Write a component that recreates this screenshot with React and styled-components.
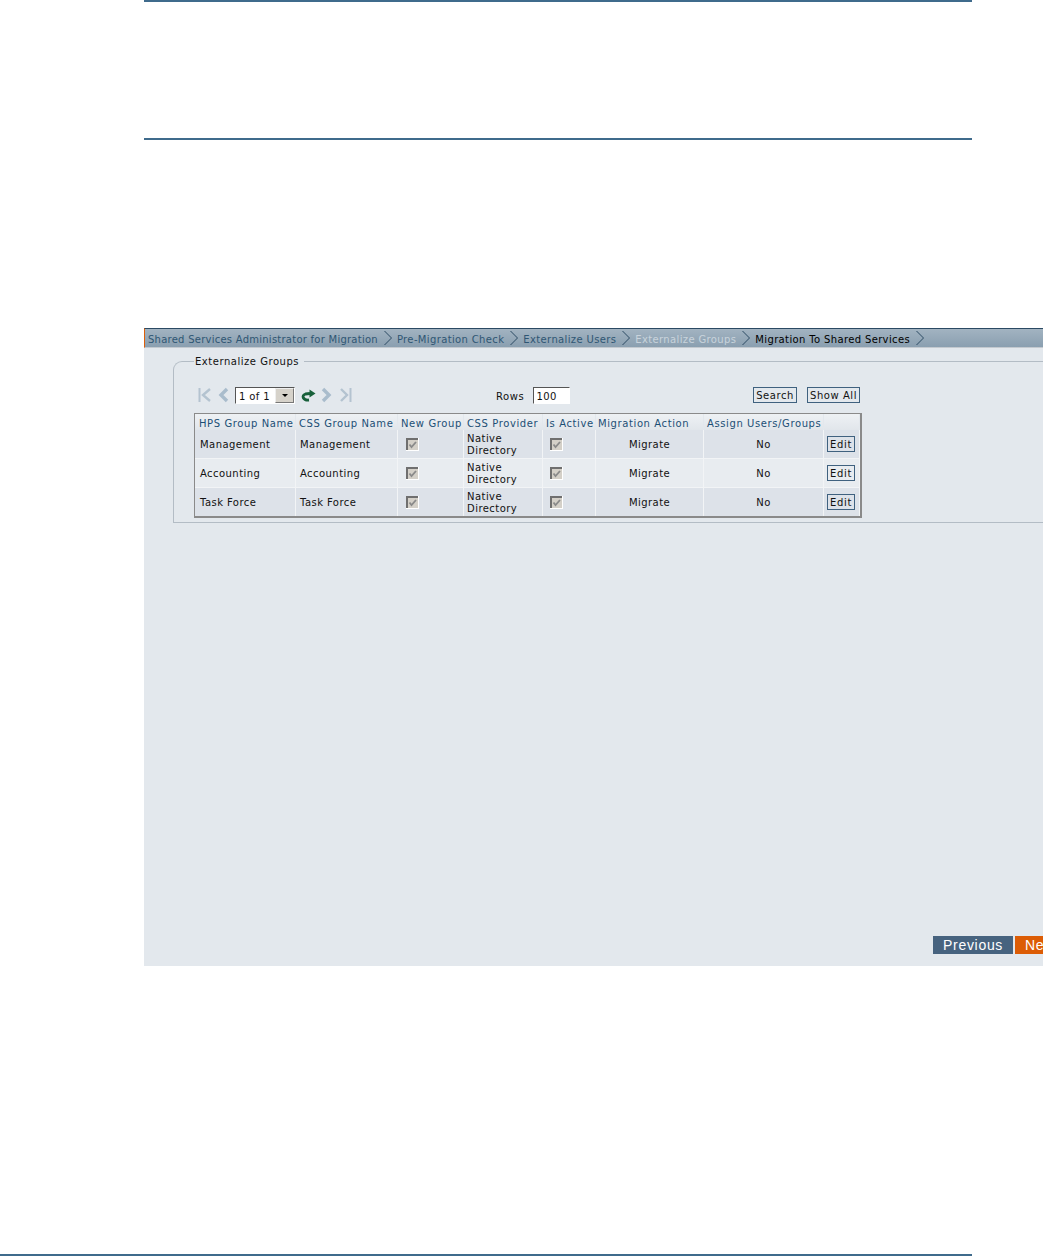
import React from 'react';
import styled, { createGlobalStyle } from 'styled-components';

const Global = createGlobalStyle`
  html, body { margin:0; padding:0; background:#fff; }
  body { font-family:"DejaVu Sans", Verdana, sans-serif; font-size:10px; color:#111; }
`;

const Page = styled.div`
  width:1043px;
  height:1256px;
  overflow:hidden;
  display:flex;
  flex-direction:column;
  padding-left:144px;
  box-sizing:border-box;
`;

const Band = styled.div`
  width:828px;
  height:140px;
  flex:none;
  box-sizing:border-box;
  border-top:2px solid #3f6b8c;
  border-bottom:2px solid #3f6b8c;
`;

const BottomRule = styled.div`
  width:972px;
  flex:none;
  margin:auto 0 0 -144px;
  border-top:2px solid #3f6b8c;
`;

const Shot = styled.div`
  width:899px;
  height:638px;
  flex:none;
  margin-top:188px;
  background:#e3e8ed;
  display:flex;
  flex-direction:column;
  overflow:hidden;
`;

const Crumbs = styled.div`
  height:18px;
  flex:none;
  display:flex;
  align-items:center;
  padding-left:3px;
  border-top:1px solid #2b4a63;
  border-left:1px solid #dd5f0a;
  border-bottom:1px solid #c3c9cf;
  background:linear-gradient(#a2b3c1, #8a9fb0);
`;

const Crumb = styled.span`
  white-space:nowrap;
  padding-top:2px;
  letter-spacing:${p => p.$tight ? '.25px' : '.36px'};
  color:${p => p.$state === 'current' ? '#000' : p.$state === 'active' ? '#dbe2e8' : '#2f5673'};
  ${p => p.$state === 'active' ? 'opacity:.75;' : ''}
`;

const ChevronSvg = styled.svg`
  width:10px;
  height:16px;
  margin:0 4px 0 5px;
  flex:none;
`;

const Chevron = () => (
  <ChevronSvg viewBox="0 0 10 16" fill="none" stroke="#2b4a63" strokeWidth="1">
    <path d="M1.5 1 L8.5 8 L1.5 15" />
  </ChevronSvg>
);

const Fieldset = styled.fieldset`
  margin:6px 0 0 29px;
  width:900px;
  height:169px;
  box-sizing:border-box;
  padding:0 0 0 20px;
  flex:none;
  border:1px solid #b3bcc5;
  border-radius:9px 0 0 0;
  border-right:0;
  min-inline-size:auto;
`;

const Legend = styled.legend`
  padding:2px 5px 0 1px;
  margin-left:0;
  font-size:10px;
  line-height:12px;
  letter-spacing:.53px;
`;

const Toolbar = styled.div`
  width:666px;
  height:20px;
  margin-top:17px;
  display:flex;
  align-items:center;
`;

const PagerIcon = styled.svg`
  width:${p => p.$w || 14}px;
  height:16px;
  flex:none;
  margin-right:${p => p.$gap || 0}px;
`;

const Pager = styled.div`
  display:flex;
  align-items:center;
  padding-left:4px;
  width:298px;
  flex:none;
`;

const PageSelect = styled.div`
  width:60px;
  height:17px;
  box-sizing:border-box;
  display:flex;
  align-items:flex-start;
  justify-content:space-between;
  line-height:17px;
  border:1px solid #555;
  border-right-color:#fff;
  border-bottom-color:#fff;
  background:#fff;
  padding-left:3px;
  margin-right:5px;
  letter-spacing:.4px;
`;

const SelectArrow = styled.span`
  width:19px;
  height:15px;
  flex:none;
  display:flex;
  align-items:center;
  justify-content:center;
  background:#d6d2ca;
  border:1px solid #eee;
  border-right-color:#777;
  border-bottom-color:#777;
  box-sizing:border-box;
  &::after {
    content:"";
    border:3px solid transparent;
    border-top:3px solid #000;
    border-bottom:0;
  }
`;

const RowsLabel = styled.span`
  letter-spacing:.6px;
  padding-top:2px;
  margin-right:9px;
`;

const RowsInput = styled.div`
  width:37px;
  height:17px;
  box-sizing:border-box;
  border:1px solid #555;
  border-right-color:#fff;
  border-bottom-color:#fff;
  background:#fff;
  padding-left:2px;
  line-height:17px;
  letter-spacing:.4px;
`;

const ToolButton = styled.div`
  box-sizing:border-box;
  width:${p => p.$w}px;
  height:16px;
  text-align:center;
  line-height:16px;
  border:1px solid #3f617f;
  background:#e3e8ed;
  letter-spacing:.55px;
  margin-left:${p => p.$left}px;
  flex:none;
`;

const Table = styled.table`
  width:667px;
  margin-top:8px;
  table-layout:fixed;
  border-collapse:separate;
  border-spacing:0;
  box-sizing:border-box;
  border-style:solid;
  border-width:1px 2px 2px 1px;
  border-color:#8a8a8a;
  background:#e9edf1;
`;

const Head = styled.th`
  height:16px;
  padding:2px 0 0 ${p => p.$pad ?? 3}px;
  box-sizing:border-box;
  text-align:left;
  font-weight:normal;
  font-size:10px;
  white-space:nowrap;
  letter-spacing:.6px;
  color:#1c4f75;
  background:linear-gradient(#eef1f4, #e1e6eb);
  border-right:1px solid #e3e8ed;
`;

const Cell = styled.td`
  height:${p => p.$last ? 28 : 29}px;
  padding:${p => p.$control ? 0 : 2}px 0 0 ${p => p.$center ? 0 : (p.$pad ?? 4)}px;
  box-sizing:border-box;
  font-size:10px;
  line-height:12px;
  letter-spacing:.45px;
  text-align:${p => p.$center ? 'center' : 'left'};
  background:${p => p.$odd ? '#dde2e9' : '#e8ecf0'};
  border-right:1px solid #f2f4f6;
  border-bottom:${p => p.$last ? 0 : 1}px solid #f2f4f6;
`;

const CheckSvg = styled.svg`
  width:13px;
  height:13px;
  display:block;
  margin-left:${p => p.$left}px;
`;

const Check = ({ left }) => (
  <CheckSvg $left={left} viewBox="0 0 13 13">
    <rect x="0" y="0" width="13" height="13" fill="#fff" />
    <rect x="0" y="0" width="12" height="12" fill="#6f6f6f" />
    <rect x="2" y="2" width="10" height="10" fill="#d4d0c8" />
    <path d="M3.5 6.5 L5.5 9 L10 4" fill="none" stroke="#8a8a8a" strokeWidth="1.8" />
  </CheckSvg>
);

const EditButton = styled.div`
  width:28px;
  height:16px;
  margin-left:3px;
  box-sizing:border-box;
  border:1px solid #3f617f;
  text-align:center;
  line-height:15px;
  letter-spacing:.7px;
`;

const Footer = styled.div`
  margin-top:auto;
  height:30px;
  flex:none;
  display:flex;
  padding-left:789px;
  gap:2px;
`;

const NavButton = styled.div`
  width:80px;
  height:18px;
  flex:none;
  box-sizing:border-box;
  padding-left:10px;
  font-family:"Liberation Sans", Arial, sans-serif;
  font-size:14px;
  line-height:18px;
  letter-spacing:.7px;
  color:#fff;
  background:${p => p.$primary ? '#dc5c05' : '#47637f'};
`;

const groups = ['Management', 'Accounting', 'Task Force'];
const widths = [101, 102, 66, 79, 53, 108, 120, 36];
const heads = ['HPS Group Name', 'CSS Group Name', 'New Group', 'CSS Provider', 'Is Active', 'Migration Action', 'Assign Users/Groups', ''];

export default function App() {
  return (
    <Page>
      <Global />
      <Band />
      <Shot>
        <Crumbs>
          <Crumb $tight>Shared Services Administrator for Migration</Crumb><Chevron />
          <Crumb>Pre-Migration Check</Crumb><Chevron />
          <Crumb>Externalize Users</Crumb><Chevron />
          <Crumb $state="active">Externalize Groups</Crumb><Chevron />
          <Crumb $state="current">Migration To Shared Services</Crumb><Chevron />
        </Crumbs>
        <Fieldset>
          <Legend>Externalize Groups</Legend>
          <Toolbar>
            <Pager>
              <PagerIcon $w={15} $gap={5} viewBox="0 0 15 16" fill="none" stroke="#b4c3d0" strokeWidth="2.4">
                <path d="M1.5 1 V15" strokeWidth="2" /><path d="M12 2 L5 8 L12 14" />
              </PagerIcon>
              <PagerIcon $w={11} $gap={6} viewBox="0 0 11 16" fill="none" stroke="#a9bccc" strokeWidth="3.4">
                <path d="M9 2 L3 8 L9 14" />
              </PagerIcon>
              <PageSelect>1 of 1<SelectArrow /></PageSelect>
              <PagerIcon $w={16} $gap={5} viewBox="0 0 16 16" fill="none">
                <path d="M9 13 C3 13.5 1 8.5 5.5 7 L10 6.5" stroke="#17603a" strokeWidth="2.8" />
                <path d="M9.5 2.5 L15.5 6.5 L9.5 10.5 Z" fill="#17603a" />
              </PagerIcon>
              <PagerIcon $w={11} $gap={7} viewBox="0 0 11 16" fill="none" stroke="#a9bccc" strokeWidth="3.4">
                <path d="M2 2 L8 8 L2 14" />
              </PagerIcon>
              <PagerIcon $w={13} viewBox="0 0 13 16" fill="none" stroke="#b4c3d0" strokeWidth="2.4">
                <path d="M2 2 L8 8 L2 14" /><path d="M11.5 1 V15" strokeWidth="2" />
              </PagerIcon>
            </Pager>
            <RowsLabel>Rows</RowsLabel>
            <RowsInput>100</RowsInput>
            <ToolButton $left={183} $w={44}>Search</ToolButton>
            <ToolButton $left={10} $w={53}>Show All</ToolButton>
          </Toolbar>
          <Table>
            <colgroup>
              {widths.map((w, i) => <col key={i} width={w} />)}
            </colgroup>
            <thead>
              <tr>{heads.map((h, i) => <Head key={h} $pad={i === 0 ? 4 : i === 5 ? 2 : undefined}>{h}</Head>)}</tr>
            </thead>
            <tbody>
              {groups.map((g, i) => {
                const odd = i % 2 === 0;
                const last = i === groups.length - 1;
                return (
                  <tr key={g}>
                    <Cell $odd={odd} $last={last} $pad={5}>{g}</Cell>
                    <Cell $odd={odd} $last={last}>{g}</Cell>
                    <Cell $odd={odd} $last={last} $control><Check left={4} /></Cell>
                    <Cell $odd={odd} $last={last} $pad={3}>Native<br />Directory</Cell>
                    <Cell $odd={odd} $last={last} $control><Check left={3} /></Cell>
                    <Cell $odd={odd} $last={last} $center>Migrate</Cell>
                    <Cell $odd={odd} $last={last} $center>No</Cell>
                    <Cell $odd={odd} $last={last} $pad={0} $control><EditButton>Edit</EditButton></Cell>
                  </tr>
                );
              })}
            </tbody>
          </Table>
        </Fieldset>
        <Footer>
          <NavButton>Previous</NavButton>
          <NavButton $primary>Next</NavButton>
        </Footer>
      </Shot>
      <BottomRule />
    </Page>
  );
}
